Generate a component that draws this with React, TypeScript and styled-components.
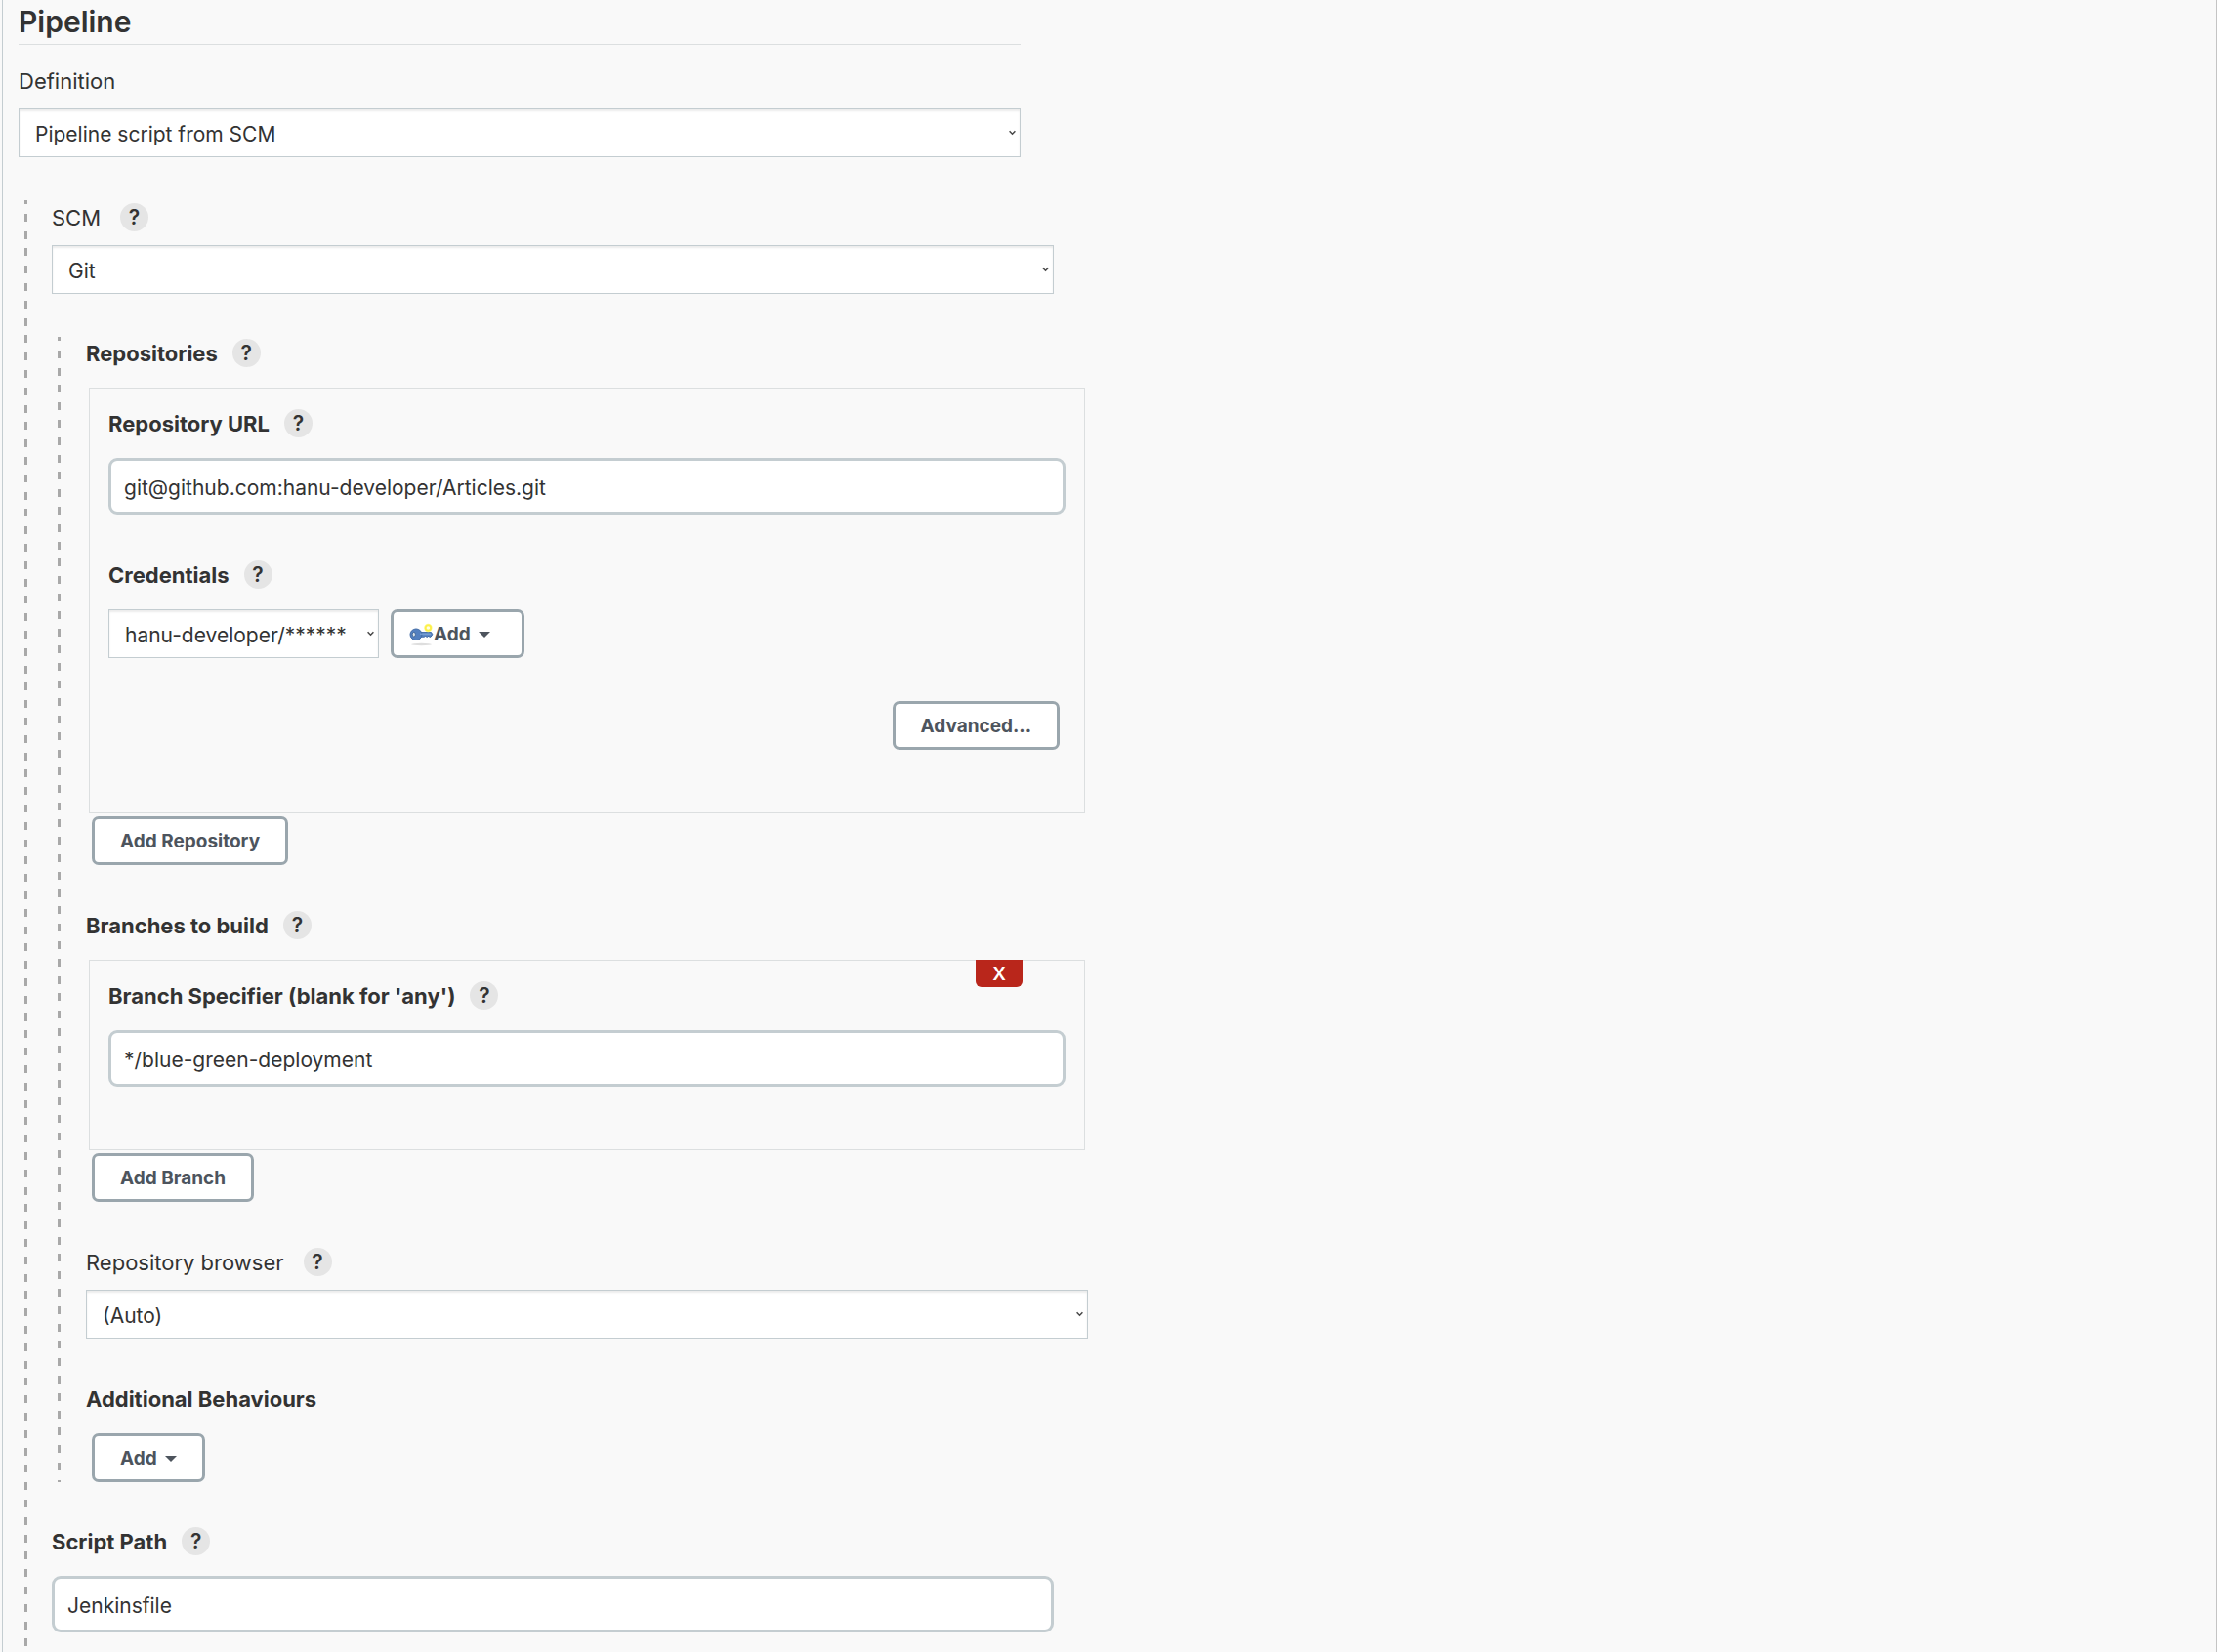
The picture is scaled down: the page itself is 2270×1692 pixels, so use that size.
import React from "react";
import styled, { createGlobalStyle, css } from "styled-components";

const GlobalStyle = createGlobalStyle`
  *, *::before, *::after { box-sizing: border-box; }
  html, body { margin: 0; background: #f9f9f9; }
  body, button, input, select {
    font-family: Inter, Roboto, "Liberation Sans", sans-serif;
    font-size: 22px;
    line-height: 29px;
    color: #333;
  }
`;

const Page = styled.main`
  min-height: 100vh;
  margin-left: 2px;
  padding: 0 0 20px 16px;
  border-left: 1px solid #c4cdd1;
  border-right: 1px solid #c4c4c4;
`;

const Form = styled.form`
  width: 46%;
  max-width: 1026px;
  min-width: 640px;
`;

const Title = styled.h1`
  margin: 0 0 22px;
  border-bottom: 1px solid #dcdfe0;
  font-size: 30px;
  line-height: 45px;
  font-weight: 600;
`;

const Nested = styled.div<{ $inner?: boolean }>`
  margin: 44px -34px ${(p) => (p.$inner ? "46px" : "-20px")} 6px;
  padding: ${(p) => (p.$inner ? "2px 0 0 29px" : "3px 0 20px 28px")};
  ${(p) =>
    p.$inner &&
    css`
      margin-right: -35px;
    `}
  background: repeating-linear-gradient(
      #a9a9a9 0 4px,
      transparent 4px calc(89px / 5 - 4px),
      #a9a9a9 calc(89px / 5 - 4px) calc(89px / 5)
    )
    left top / 3px 100% no-repeat;
`;

const Stack = styled.div`
  display: flex;
  flex-direction: column;
  gap: 47px;
`;

const Field = styled.div<{ $plain?: boolean }>`
  display: flex;
  flex-direction: column;
  gap: ${(p) => (p.$plain ? "14px" : "21px")};
`;

const LabelRow = styled.div<{ $plain?: boolean }>`
  display: flex;
  align-items: center;
  gap: ${(p) => (p.$plain ? "20px" : "15px")};
  height: 29px;
  font-weight: ${(p) => (p.$plain ? 400 : 700)};

  > label,
  > span {
    padding-top: 1px;
  }
`;

const HelpLink = styled.a`
  display: grid;
  place-items: center;
  width: 29px;
  height: 29px;
  border-radius: 50%;
  background: #e5e5e5;
  color: #333;
  font-size: 21px;
  font-weight: 600;
  text-decoration: none;
`;

const SelectShell = styled.div<{ $fit?: boolean }>`
  display: grid;
  align-items: center;
  width: ${(p) => (p.$fit ? "277px" : "100%")};

  > * {
    grid-area: 1 / 1;
  }
  > svg {
    justify-self: end;
    margin-right: 5px;
    pointer-events: none;
  }
`;

const SelectBox = styled.select`
  appearance: none;
  width: 100%;
  height: 50px;
  padding: 2px 24px 0 16px;
  border: 1px solid #c4cdd1;
  border-radius: 0;
  background: #fff;
  box-shadow: inset 0 2px 2px rgba(0, 0, 0, 0.08);
  font-size: 21px;
`;

const TextInput = styled.input`
  width: 100%;
  height: 58px;
  padding: 2px 13px 0;
  border: 3px solid #c4cdd1;
  border-radius: 9px;
  background: #fff;
  font-size: 21px;
`;

const Panel = styled.section`
  position: relative;
  display: flex;
  flex-direction: column;
  margin: 0 3px;
  padding: 21px 19px 64px;
  border: 1px solid #dcdfe0;
`;

const Button = styled.button<{ $icon?: boolean }>`
  display: inline-flex;
  align-items: center;
  height: 50px;
  margin: 0 6px;
  padding: ${(p) => (p.$icon ? "1px 32px 0 16px" : "1px 26px 0")};
  border: 3px solid #9aa6ad;
  border-radius: 7px;
  background: #fff;
  color: #4d545d;
  font-size: 19px;
  font-weight: 700;
`;

const Caret = styled.span`
  margin-left: 8px;
  border: 6px solid transparent;
  border-top-color: currentColor;
  border-bottom: 0;
`;

const Row = styled.div`
  display: flex;
  align-items: center;
  gap: 6px;
`;

const ActionsRow = styled.div`
  display: flex;
  justify-content: flex-end;
  margin-top: 44px;
`;

const AddRow = styled.div`
  display: flex;
  margin-top: -18px;
`;

const DeleteButton = styled.button`
  position: absolute;
  top: -1px;
  right: 63px;
  width: 48px;
  height: 28px;
  padding: 1px 0 0;
  border: 0;
  border-radius: 0 0 6px 6px;
  background: #b9261b;
  color: #fff;
  font-size: 19px;
  line-height: 27px;
  font-weight: 600;
`;

function Help({ topic }: { topic: string }) {
  return (
    <HelpLink href="#help" aria-label={`Help for feature: ${topic}`}>
      ?
    </HelpLink>
  );
}

function Label(props: { text: string; id?: string; plain?: boolean; help?: boolean }) {
  return (
    <LabelRow $plain={props.plain}>
      {props.id ? <label htmlFor={props.id}>{props.text}</label> : <span>{props.text}</span>}
      {props.help && <Help topic={props.text} />}
    </LabelRow>
  );
}

function Select(props: { id: string; value: string; fit?: boolean }) {
  return (
    <SelectShell $fit={props.fit}>
      <SelectBox id={props.id} defaultValue={props.value}>
        <option>{props.value}</option>
      </SelectBox>
      <svg width="7" height="6" viewBox="0 0 7 6" fill="none" aria-hidden="true">
        <path d="M0.6 1.2 3.5 4.2 6.4 1.2" stroke="#484848" strokeWidth="1.5" />
      </svg>
    </SelectShell>
  );
}

function KeyIcon() {
  return (
    <svg width="25" height="24" viewBox="0 0 25 24" aria-hidden="true">
      <ellipse cx="12.5" cy="22" rx="10.5" ry="1.2" fill="#dedede" />
      <path
        d="M11.5 9.6H22.5L23.8 11.8 22 14.2H20.6L19.8 13 18.9 14.2H17.5L16.6 13 15.6 14.2H11.5Z"
        fill="#5c87c4"
        stroke="#416ba6"
        strokeWidth="1"
      />
      <ellipse cx="7" cy="11.8" rx="6" ry="5.8" fill="#5380bf" stroke="#416ba6" />
      <ellipse cx="4.8" cy="11.7" rx="1.6" ry="2.3" fill="#d8e2e8" stroke="#3a5f91" strokeWidth="0.8" />
      <path d="M11 11.2H22" stroke="#83a7d8" strokeWidth="1" />
      <circle cx="19.4" cy="5" r="4.2" fill="#fff98c" />
      <circle cx="19.4" cy="5" r="2.7" fill="#fffde0" stroke="#fdf04a" strokeWidth="1.8" />
    </svg>
  );
}

export default function App() {
  return (
    <>
      <GlobalStyle />
      <Page>
        <Form onSubmit={(e: React.FormEvent) => e.preventDefault()}>
          <Title>Pipeline</Title>
          <Field $plain>
            <Label text="Definition" id="definition" plain />
            <Select id="definition" value="Pipeline script from SCM" />
          </Field>

          <Nested>
            <Field $plain>
              <Label text="SCM" id="scm" plain help />
              <Select id="scm" value="Git" />
            </Field>

            <Nested $inner>
              <Stack>
                <Field>
                  <Label text="Repositories" help />
                  <Panel>
                    <Stack>
                      <Field>
                        <Label text="Repository URL" id="url" help />
                        <TextInput id="url" defaultValue="git@github.com:hanu-developer/Articles.git" />
                      </Field>
                      <Field>
                        <Label text="Credentials" id="credentials" help />
                        <Row>
                          <Select id="credentials" value="hanu-developer/******" fit />
                          <Button type="button" $icon>
                            <KeyIcon />
                            Add
                            <Caret />
                          </Button>
                        </Row>
                      </Field>
                    </Stack>
                    <ActionsRow>
                      <Button type="button">Advanced...</Button>
                    </ActionsRow>
                  </Panel>
                  <AddRow>
                    <Button type="button">Add Repository</Button>
                  </AddRow>
                </Field>

                <Field>
                  <Label text="Branches to build" help />
                  <Panel>
                    <DeleteButton type="button" aria-label="Delete branch">
                      X
                    </DeleteButton>
                    <Field>
                      <Label text="Branch Specifier (blank for 'any')" id="branch" help />
                      <TextInput id="branch" defaultValue="*/blue-green-deployment" />
                    </Field>
                  </Panel>
                  <AddRow>
                    <Button type="button">Add Branch</Button>
                  </AddRow>
                </Field>

                <Field $plain>
                  <Label text="Repository browser" id="browser" plain help />
                  <Select id="browser" value="(Auto)" />
                </Field>

                <Field>
                  <Label text="Additional Behaviours" />
                  <Row>
                    <Button type="button">
                      Add
                      <Caret />
                    </Button>
                  </Row>
                </Field>
              </Stack>
            </Nested>

            <Field>
              <Label text="Script Path" id="script-path" help />
              <TextInput id="script-path" defaultValue="Jenkinsfile" />
            </Field>
          </Nested>
        </Form>
      </Page>
    </>
  );
}
